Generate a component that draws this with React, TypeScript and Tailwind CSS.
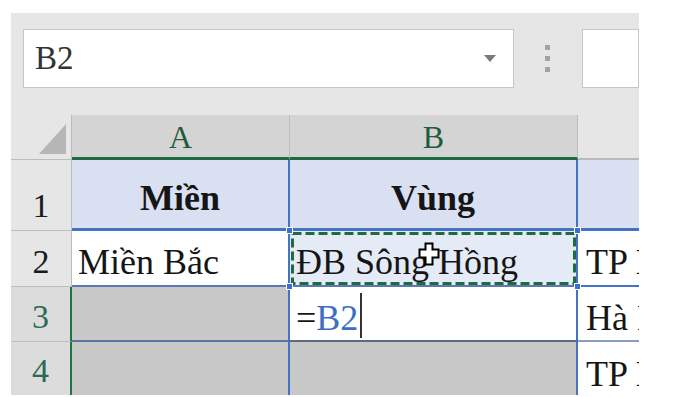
import React from "react";

const CELL = "flex items-end overflow-hidden whitespace-nowrap text-[36px] leading-none text-[#151515]";

function Handle({ className }: { className: string }) {
  return <div className={`absolute h-[7px] w-[7px] border border-white bg-[#3b6fd0] ${className}`} />;
}

function RowHead({ n, active, last }: { n: number; active?: boolean; last?: boolean }) {
  return (
    <div
      className={`flex w-[61px] shrink-0 items-end justify-center pb-[7px] text-[34px] leading-none ${
        active ? "bg-[#dcdcdc] text-[#2b6a58] border-r-2 border-r-[#217346]" : "bg-[#e6e6e6] text-[#1a1a1a] border-r border-r-[#bcbcbc]"
      } ${last ? "" : "border-b border-b-[#bdbdbd]"}`}
    >
      {n}
    </div>
  );
}

export default function App() {
  return (
    <div className="h-[397px] w-[690px] overflow-hidden bg-white font-['Times_New_Roman']">
      <div className="ml-[11px] pt-[13px]">
        <div className="flex h-[382px] w-[628px] flex-col overflow-hidden bg-[#e6e6e6]">
          {/* formula bar */}
          <div className="flex shrink-0 items-center pt-[16px]">
            <div className="ml-[12px] flex h-[59px] w-[519px] items-center justify-between border border-[#c6c6c6] bg-white pl-[11px] pr-[17px]">
              <span className="text-[33px] leading-none text-[#333]">B2</span>
              <svg width="12" height="7" viewBox="0 0 12 7">
                <path d="M0 0h12L6 7z" fill="#7a7a7a" />
              </svg>
            </div>
            <div className="ml-[31px] flex flex-col gap-[6px]">
              <div className="h-[5px] w-[5px] bg-[#a3a3a3]" />
              <div className="h-[5px] w-[5px] bg-[#a3a3a3]" />
              <div className="h-[5px] w-[5px] bg-[#a3a3a3]" />
            </div>
            <div className="ml-[32px] h-[59px] w-[60px] border border-[#c6c6c6] bg-white" />
          </div>

          {/* sheet */}
          <div className="mt-[27px] flex flex-col">
            {/* column headers */}
            <div className="flex h-[45px]">
              <div className="flex w-[61px] shrink-0 items-end justify-end border-b border-r border-[#bcbcbc] bg-[#e6e6e6] pb-[5px] pr-[5px]">
                <svg width="27" height="30" viewBox="0 0 27 30">
                  <path d="M27 0V30H0z" fill="#b6b6b6" />
                </svg>
              </div>
              <div className="flex w-[218px] shrink-0 items-end justify-center border-b-[3px] border-r border-b-[#1e6b43] border-r-[#bdbdbd] bg-[#d4d4d4] pb-[4px] text-[32px] leading-none text-[#1f5c3c]">
                A
              </div>
              <div className="flex w-[288px] shrink-0 items-end justify-center border-b-[3px] border-r border-b-[#1e6b43] border-r-[#bdbdbd] bg-[#d4d4d4] pb-[4px] text-[32px] leading-none text-[#1f5c3c]">
                B
              </div>
              <div className="flex-1 border-b-2 border-b-[#b9b9b9] bg-[#e6e6e6]" />
            </div>

            {/* row 1 */}
            <div className="flex h-[71px]">
              <RowHead n={1} />
              <div className={`${CELL} w-[218px] shrink-0 justify-center border-b-[3px] border-r-2 border-[#4472c4] bg-[#d8e0f2] pb-[12px] font-bold`}>
                Miền
              </div>
              <div className={`${CELL} w-[288px] shrink-0 justify-center border-b-[3px] border-r-2 border-[#4472c4] bg-[#d8e0f2] pb-[12px] font-bold`}>
                Vùng
              </div>
              <div className="flex-1 border-b-[3px] border-[#4472c4] bg-[#d8e0f2]" />
            </div>

            {/* row 2 */}
            <div className="flex h-[56px]">
              <RowHead n={2} />
              <div className={`${CELL} w-[218px] shrink-0 border-b-2 border-r-2 border-b-[#5b78b0] border-r-[#4472c4] bg-white pb-[5px] pl-[6px]`}>
                Miền Bắc
              </div>
              <div className={`${CELL} relative w-[288px] shrink-0 overflow-visible border-b-2 border-r-2 border-b-[#5b78b0] border-r-[#4472c4] bg-[#e5eaf7] pb-[5px] pl-[6px]`}>
                ĐB Sông Hồng
                <svg className="absolute left-0 top-0" width="288" height="56" viewBox="0 0 288 56">
                  <rect x="2.5" y="2.5" width="282" height="50" fill="none" stroke="#1e6b43" strokeWidth="3" strokeDasharray="9 4" />
                </svg>
                <Handle className="-left-[4px] -top-[4px]" />
                <Handle className="-right-[5px] -top-[4px]" />
                <Handle className="-left-[4px] -bottom-[5px]" />
                <Handle className="-right-[5px] -bottom-[5px]" />
                <svg className="absolute left-[128px] top-[11px]" width="22" height="24" viewBox="0 0 22 24">
                  <path d="M7.5 1.5h7v6h6v8h-6v7h-7v-7h-6v-8h6z" fill="white" stroke="black" strokeWidth="2" />
                </svg>
              </div>
              <div className={`${CELL} flex-1 border-b-2 border-[#4472c4] bg-white pb-[5px] pl-[8px]`}>TP H</div>
            </div>

            {/* row 3 */}
            <div className="flex h-[55px]">
              <RowHead n={3} active />
              <div className="w-[218px] shrink-0 border-b-2 border-r-2 border-b-[#5a73a0] border-r-[#4472c4] bg-[#c8c8c8]" />
              <div className={`${CELL} w-[288px] shrink-0 border-b-2 border-r-2 border-b-[#5c6a82] border-r-[#4472c4] bg-white pb-[4px] pl-[6px]`}>
                <span>=</span>
                <span className="text-[#3b6fc4]">B2</span>
                <span className="mb-[-2px] ml-[2px] h-[45px] w-[2px] bg-[#333]" />
              </div>
              <div className={`${CELL} flex-1 border-b-2 border-[#8a9cc0] bg-white pb-[4px] pl-[8px]`}>Hà N</div>
            </div>

            {/* row 4 */}
            <div className="flex h-[53px]">
              <RowHead n={4} active last />
              <div className="w-[218px] shrink-0 border-r-2 border-r-[#4472c4] bg-[#c8c8c8]" />
              <div className="w-[288px] shrink-0 border-r-2 border-r-[#4472c4] bg-[#c8c8c8]" />
              <div className={`${CELL} flex-1 bg-white pb-[3px] pl-[8px]`}>TP H</div>
            </div>
          </div>
        </div>
      </div>
    </div>
  );
}
